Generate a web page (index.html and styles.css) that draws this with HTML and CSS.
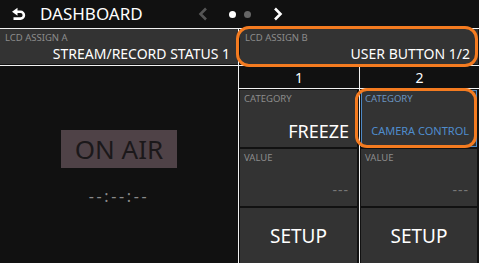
FILE: index.html
```html
<!DOCTYPE html>
<html lang="en">
  <head>
    <meta charset="utf-8">
    <title>Dashboard</title>
    <link rel="stylesheet" href="styles.css">
  </head>
  <body>
  <div class="screen">

    <div class="topbar">
      <div class="home">
        <svg class="back" width="14" height="13" viewBox="0 0 14 13">
          <polygon points="0,3.8 5.5,-0.2 5.5,7.8" fill="#fff"/>
          <path d="M4 3.8 H8.5 A3.4 3.4 0 0 1 8.5 10.6 H1.5" fill="none" stroke="#fff" stroke-width="2.6"/>
        </svg>
        <span class="home-title">DASHBOARD</span>
      </div>
      <div class="pager">
        <svg class="chev" width="10" height="14" viewBox="0 0 10 14">
          <path d="M8 1.5 L2.5 7 L8 12.5" fill="none" stroke="#555" stroke-width="2.6"/>
        </svg>
        <span class="dot on"></span>
        <span class="dot"></span>
        <svg class="chev" width="10" height="14" viewBox="0 0 10 14">
          <path d="M2 1.5 L7.5 7 L2 12.5" fill="none" stroke="#fff" stroke-width="2.6"/>
        </svg>
      </div>
      <div></div>
    </div>

    <div class="main">
      <div class="left">
        <div class="assign-slot">
          <div class="assign">
            <div class="label">LCD ASSIGN A</div>
            <div class="assign-value">STREAM/RECORD STATUS 1</div>
          </div>
        </div>
        <div class="stage">
          <div class="onair">ON AIR</div>
          <div class="timer">--:--:--</div>
        </div>
      </div>

      <div class="right">
        <div class="assign-slot">
          <div class="assign">
            <div class="label">LCD ASSIGN B</div>
            <div class="assign-value">USER BUTTON 1/2</div>
          </div>
        </div>
        <div class="pads">
          <div class="pad-col">
            <div class="pad-num">1</div>
            <div class="cells">
              <div class="cell">
                <div class="label">CATEGORY</div>
                <div class="cell-value big">FREEZE</div>
              </div>
              <div class="cell">
                <div class="label">VALUE</div>
                <div class="cell-value dim">---</div>
              </div>
              <div class="cell setup">SETUP</div>
            </div>
          </div>
          <div class="pad-col">
            <div class="pad-num">2</div>
            <div class="cells">
              <div class="cell selected">
                <div class="label">CATEGORY</div>
                <div class="cell-value small">CAMERA CONTROL</div>
              </div>
              <div class="cell">
                <div class="label">VALUE</div>
                <div class="cell-value dim">---</div>
              </div>
              <div class="cell setup">SETUP</div>
            </div>
          </div>
        </div>
      </div>
    </div>

    <!-- highlight marks drawn over the screen -->
    <div class="mark mark-assign"></div>
    <div class="mark mark-category"></div>

  </div>
  </body>
</html>
```

FILE: styles.css
```css
html, body {
  margin: 0;
  padding: 0;
  background: #111111;
}
body {
  width: 479px;
  height: 263px;
  overflow: hidden;
  color: #ffffff;
  font-family: "Noto Sans", sans-serif;
}

.screen {
  position: relative;
  height: 263px;
}

/* top bar */

.topbar {
  height: 28px;
  display: grid;
  grid-template-columns: 1fr auto 1fr;
  align-items: center;
  border-bottom: 1px solid #f2f2f2;
}
.home {
  display: flex;
  align-items: center;
  padding-left: 12px;
}
.back {
  display: block;
  margin-right: 14px;
  overflow: visible;
}
.home-title {
  font-size: 17px;
  line-height: 28px;
}
.pager {
  display: flex;
  align-items: center;
  padding-left: 1px;
}
.chev {
  display: block;
}
.dot {
  width: 7px;
  height: 7px;
  border-radius: 50%;
  background: #666;
  margin-right: 22px;
}
.dot.on {
  background: #fff;
  margin-left: 21px;
  margin-right: 8px;
}

/* main area */

.main {
  display: grid;
  grid-template-columns: 239px 240px;
  height: 234px;
}
.left {
  border-right: 1px solid #f2f2f2;
  display: flex;
  flex-direction: column;
}
.right {
  display: flex;
  flex-direction: column;
}

.assign-slot {
  padding-bottom: 1px;
  border-bottom: 1px solid #f2f2f2;
}
.right .assign-slot {
  padding: 0 1px 1px;
}
.assign {
  height: 35px;
  background: #333333;
  padding: 3px 8px 0 5px;
  box-sizing: border-box;
}
.label {
  font-size: 9.5px;
  line-height: 12px;
  color: #8c8c8c;
}
.assign-value {
  font-size: 14px;
  line-height: 18px;
  text-align: right;
  margin-top: 1px;
}

.stage {
  flex: 1;
  display: flex;
  flex-direction: column;
  align-items: center;
  justify-content: center;
  padding-top: 5px;
}
.onair {
  background: #4f4247;
  color: #1b181a;
  font-size: 26px;
  line-height: 38px;
  padding: 0 14px;
}
.timer {
  margin-top: 20px;
  font-size: 16px;
  line-height: 16px;
  letter-spacing: 2.6px;
  color: #8a8a8a;
}

/* user button pads */

.pads {
  flex: 1;
  display: grid;
  grid-template-columns: 121px 119px;
}
.pad-col {
  display: flex;
  flex-direction: column;
}
.pad-col:first-child {
  border-right: 1px solid #f2f2f2;
}
.pad-num {
  height: 23px;
  line-height: 22px;
  padding-top: 1px;
  box-sizing: border-box;
  text-align: center;
  font-size: 14px;
  border-bottom: 1px solid #f2f2f2;
}
.cells {
  flex: 1;
  display: flex;
  flex-direction: column;
  gap: 2px;
  padding: 1px 2px 0 1px;
}
.cell {
  height: 57px;
  flex: none;
  background: #333333;
  padding: 3px 8px 7px 4px;
  box-sizing: border-box;
  display: flex;
  flex-direction: column;
}
.cell-value {
  margin-top: auto;
  height: 18px;
  line-height: 18px;
  text-align: right;
}
.cell-value.big {
  font-size: 18px;
}
.cell-value.small {
  font-size: 11px;
  color: #4f8ccc;
}
.cell-value.dim {
  font-size: 14px;
  letter-spacing: 1px;
  color: #777;
}
.cell.selected {
  border: 1px solid #4d88c4;
  padding: 2px 7px 6px 3px;
}
.cell.selected .label {
  color: #6a94c0;
}
.cell.setup {
  flex: 1;
  padding: 0;
  align-items: center;
  justify-content: center;
  font-size: 19px;
  line-height: 26px;
}

/* orange highlight marks */

.mark {
  position: absolute;
  border: 3px solid #f47b20;
  border-radius: 13px;
  box-sizing: border-box;
}
.mark-assign {
  left: 236px;
  top: 26px;
  width: 242px;
  height: 41px;
}
.mark-category {
  left: 355px;
  top: 88px;
  width: 122px;
  height: 60px;
  border-radius: 12px;
}
```
